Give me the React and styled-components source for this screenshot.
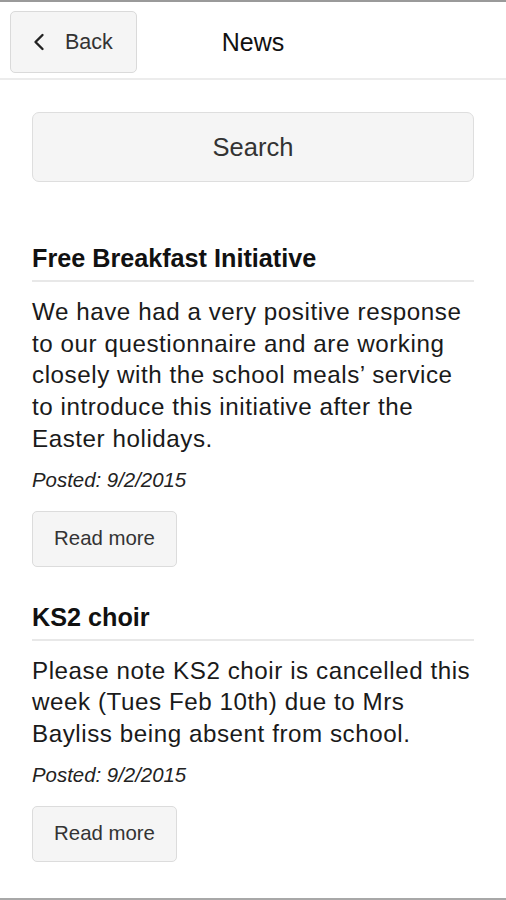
import React from 'react';
import styled, { createGlobalStyle } from 'styled-components';

const GlobalStyle = createGlobalStyle`
  html, body {
    margin: 0;
    padding: 0;
    background: #ffffff;
  }
  body {
    font-family: "Liberation Sans", Arial, Helvetica, sans-serif;
    color: #111;
  }
`;

const Screen = styled.div`
  width: 506px;
  height: 900px;
  box-sizing: border-box;
  border-top: 2px solid #9a9a9a;
  border-bottom: 2px solid #a8a8a8;
  display: flex;
  flex-direction: column;
  overflow: hidden;
`;

const Header = styled.header`
  display: grid;
  grid-template-columns: 1fr auto 1fr;
  align-items: center;
  height: 76px;
  flex-shrink: 0;
  padding: 0 10px;
  border-bottom: 2px solid #ececec;
`;

const BackButton = styled.button`
  justify-self: start;
  display: flex;
  align-items: center;
  gap: 20px;
  width: 127px;
  height: 62px;
  margin-top: 4px;
  padding: 0 0 0 22px;
  box-sizing: border-box;
  background: #f5f5f5;
  border: 1px solid #dadada;
  border-radius: 5px;
  font-family: inherit;
  font-size: 21.5px;
  color: #333;
  cursor: pointer;
`;

const Title = styled.h1`
  margin: 4px 0 0;
  font-size: 25px;
  font-weight: normal;
  color: #111;
`;

const Content = styled.main`
  flex: 1;
  padding: 32px 32px 0;
`;

const SearchButton = styled.button`
  display: block;
  width: 100%;
  height: 70px;
  background: #f5f5f5;
  border: 1px solid #dedede;
  border-radius: 7px;
  font-family: inherit;
  font-size: 25.5px;
  color: #333;
  cursor: pointer;
`;

const NewsList = styled.div`
  margin-top: 61px;
`;

const Article = styled.article`
  margin-bottom: 35px;
`;

const Heading = styled.h2`
  margin: 0;
  padding-bottom: 7px;
  border-bottom: 2px solid #e8e8e8;
  font-size: 25.2px;
  font-weight: bold;
  line-height: 30px;
  color: #111;
`;

const Body = styled.p`
  margin: 14px 0 0;
  font-size: 24.2px;
  letter-spacing: 0.55px;
  line-height: 31.7px;
  color: #1a1a1a;
`;

const Posted = styled.p`
  margin: 13px 0 0;
  font-size: 20.4px;
  font-style: italic;
  line-height: 24px;
  color: #222;
`;

const ReadMore = styled.button`
  display: block;
  margin-top: 19px;
  width: 145px;
  height: 56px;
  background: #f5f5f5;
  border: 1px solid #dcdcdc;
  border-radius: 5px;
  font-family: inherit;
  font-size: 20.4px;
  color: #333;
  cursor: pointer;
`;

const ChevronLeft = () => (
  <svg width="12" height="18" viewBox="0 0 12 18" fill="none">
    <path d="M9.5 2 L2.5 9 L9.5 16" stroke="#222" strokeWidth="2.4" strokeLinecap="round" strokeLinejoin="round" />
  </svg>
);

const news = [
  {
    title: 'Free Breakfast Initiative',
    body: 'We have had a very positive response to our questionnaire and are working closely with the school meals\u2019 service to introduce this initiative after the Easter holidays.',
    date: '9/2/2015',
  },
  {
    title: 'KS2 choir',
    body: 'Please note KS2 choir is cancelled this week (Tues Feb 10th) due to Mrs Bayliss being absent from school.',
    date: '9/2/2015',
  },
];

export default function App() {
  return (
    <>
      <GlobalStyle />
      <Screen>
        <Header>
          <BackButton>
            <ChevronLeft />
            Back
          </BackButton>
          <Title>News</Title>
          <span />
        </Header>
        <Content>
          <SearchButton>Search</SearchButton>
          <NewsList>
            {news.map(item => (
              <Article key={item.title}>
                <Heading>{item.title}</Heading>
                <Body>{item.body}</Body>
                <Posted>Posted: {item.date}</Posted>
                <ReadMore>Read more</ReadMore>
              </Article>
            ))}
          </NewsList>
        </Content>
      </Screen>
    </>
  );
}
